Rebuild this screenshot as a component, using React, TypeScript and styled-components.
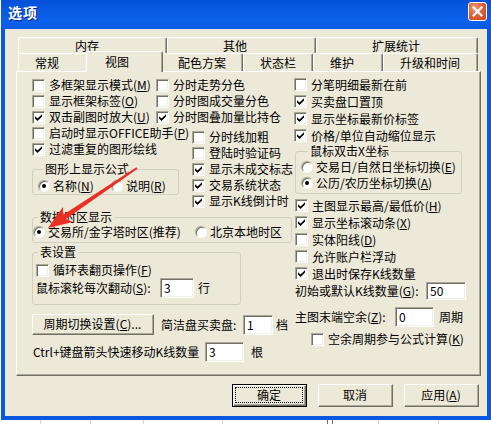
import styled, { createGlobalStyle, css } from "styled-components";

const FACE = "#ECE9D8";
const SHADOW = "#ACA899";
const DARK = "#716F64";
const FRAME_BLUE = "#0A58E0";

const GlobalStyle = createGlobalStyle`
  html, body { margin: 0; padding: 0; background: #fff; }
  body {
    font-family: "Noto Sans CJK SC", "Noto Sans", sans-serif;
    font-size: 12px;
    line-height: 12px;
    color: #000;
  }
`;

const Screen = styled.div`
  position: relative;
  width: 491px;
  height: 424px;
  overflow: hidden;
  display: flex;
  flex-direction: column;
`;

const Window = styled.div`
  width: 490px;
  height: 420px;
  margin-left: 1px;
  display: flex;
  flex-direction: column;
  flex: none;
`;

const TitleBar = styled.div`
  height: 29px;
  flex: none;
  box-sizing: border-box;
  display: flex;
  justify-content: space-between;
  align-items: flex-start;
  padding: 4px 4px 0 7px;
  background: linear-gradient(to bottom, #0350D8 0%, #0A5BE4 40%, #0C61EC 75%, #0A59E2 100%);
`;

const Title = styled.span`
  color: #fff;
  font-weight: 700;
  font-size: 14px;
  line-height: 16px;
  letter-spacing: 1px;
  text-shadow: 1px 1px 0 #0A2A80;
`;

const CloseButton = styled.div`
  width: 19px;
  height: 19px;
  margin-top: -2px;
  box-sizing: border-box;
  border: 1px solid #fff;
  border-radius: 3px;
  background: radial-gradient(circle at 35% 30%, #F09A7A 0%, #E2623C 45%, #C8421C 100%);
  display: flex;
  align-items: center;
  justify-content: center;
`;

const Body = styled.div`
  flex: 1;
  background: ${FACE};
  border: 4px solid ${FRAME_BLUE};
  border-top: none;
  padding: 8px 6px 9px 11px;
  display: flex;
  flex-direction: column;
`;

const TabRow = styled.div<{ $h: number }>`
  display: flex;
  height: ${({ $h }) => $h}px;
  margin: 0 3px 0 2px;
  flex: none;
`;

const Tab = styled.div<{ $w: number; $pad: number; $active?: boolean }>`
  flex: none;
  width: ${({ $w }) => $w}px;
  box-sizing: border-box;
  padding-left: ${({ $pad }) => $pad - 1}px;
  background: ${FACE};
  border-top: 1px solid #fff;
  border-left: 1px solid #fff;
  border-right: 1px solid ${DARK};
  box-shadow: inset -1px 0 0 ${SHADOW};
  border-radius: 2px 2px 0 0;
  display: flex;
  align-items: center;
  white-space: nowrap;
  ${({ $active, $w, $pad }) =>
    $active &&
    css`
      position: relative;
      z-index: 1;
      width: ${$w + 4}px;
      margin: -2px -2px -1px;
      padding-left: ${$pad + 1}px;
    `}
`;

const TabPanel = styled.div`
  height: 305px;
  flex: none;
  box-sizing: border-box;
  border-top: 1px solid #fff;
  border-left: 1px solid #fff;
  border-right: 1px solid ${DARK};
  border-bottom: 1px solid ${DARK};
  box-shadow: inset -1px -1px 0 ${SHADOW};
  padding: 5px 0 0 15px;
  display: flex;
`;

const LeftCol = styled.div`
  width: 262px;
  flex: none;
  display: flex;
  flex-direction: column;
`;

const RightCol = styled.div`
  flex: 1;
  display: flex;
  flex-direction: column;
  margin-top: -1px;
`;

const TopArea = styled.div`
  display: flex;
`;

const Column = styled.div<{ $w?: number; $ml?: number; $mt?: number }>`
  display: flex;
  flex-direction: column;
  flex: none;
  width: ${({ $w }) => ($w ? `${$w}px` : "auto")};
  margin-left: ${({ $ml }) => $ml ?? 0}px;
  margin-top: ${({ $mt }) => $mt ?? 0}px;
`;

const Row = styled.div<{ $h?: number; $ml?: number; $mt?: number }>`
  display: flex;
  align-items: center;
  white-space: nowrap;
  height: ${({ $h }) => $h ?? 16}px;
  margin-left: ${({ $ml }) => $ml ?? 0}px;
  margin-top: ${({ $mt }) => $mt ?? 0}px;
  flex: none;
`;

const Box = styled.span`
  width: 13px;
  height: 13px;
  flex: none;
  box-sizing: border-box;
  background: #fff;
  border: 1px solid;
  border-color: ${SHADOW} #fff #fff ${SHADOW};
  box-shadow: inset 1px 1px 0 ${DARK}, inset -1px -1px 0 #F1EFE2;
  display: flex;
  align-items: center;
  justify-content: center;
  margin-right: 4px;
`;

const RadioDot = styled.span<{ $on: boolean }>`
  width: 12px;
  height: 12px;
  flex: none;
  box-sizing: border-box;
  border-radius: 50%;
  background: #fff;
  border: 1px solid;
  border-color: ${SHADOW} #fff #fff ${SHADOW};
  box-shadow: inset 1px 1px 0 ${DARK}, 0 0 0 0.5px #E2DFD0;
  display: flex;
  align-items: center;
  justify-content: center;
  margin-right: 3px;
  &::after {
    content: "";
    width: 4px;
    height: 4px;
    border-radius: 50%;
    background: ${({ $on }) => ($on ? "#000" : "transparent")};
  }
`;

const RadioItem = styled.span<{ $w?: number }>`
  display: flex;
  align-items: center;
  flex: none;
  width: ${({ $w }) => ($w ? `${$w}px` : "auto")};
`;

const Group = styled.fieldset<{ $w: number; $pad: string; $mt?: number; $ml?: number }>`
  width: ${({ $w }) => $w}px;
  box-sizing: border-box;
  margin: ${({ $mt }) => $mt ?? 0}px 0 0 ${({ $ml }) => $ml ?? 0}px;
  min-width: 0;
  border: 1px solid #D0D0BF;
  border-radius: 3px;
  padding: ${({ $pad }) => $pad};
  flex: none;
`;

const GroupTitle = styled.legend<{ $x: number }>`
  margin-left: ${({ $x }) => $x}px;
  padding: 0 2px;
  line-height: 12px;
  font-size: 12px;
`;

const Caption = styled.span<{ $w?: number; $ml?: number }>`
  flex: none;
  width: ${({ $w }) => ($w ? `${$w}px` : "auto")};
  margin-left: ${({ $ml }) => $ml ?? 0}px;
`;

const Field = styled.div<{ $w: number; $h: number }>`
  width: ${({ $w }) => $w}px;
  height: ${({ $h }) => $h}px;
  flex: none;
  box-sizing: border-box;
  background: #fff;
  border: 1px solid;
  border-color: ${SHADOW} #fff #fff ${SHADOW};
  box-shadow: inset 1px 1px 0 ${DARK}, inset -1px -1px 0 #F1EFE2;
  padding-left: 3px;
  display: flex;
  align-items: center;
  font-size: 12px;
`;

const Button = styled.div<{ $w: number; $h: number; $default?: boolean }>`
  width: ${({ $w }) => $w}px;
  height: ${({ $h }) => $h}px;
  flex: none;
  box-sizing: border-box;
  background: ${FACE};
  display: flex;
  align-items: stretch;
  white-space: nowrap;
  ${({ $default }) =>
    $default
      ? css`
          border: 1px solid #000;
          box-shadow: inset 1px 1px 0 #fff, inset -1px -1px 0 ${DARK}, inset -2px -2px 0 ${SHADOW};
          padding: 2px 3px 3px 2px;
        `
      : css`
          border: 1px solid;
          border-color: #fff ${DARK} ${DARK} #fff;
          box-shadow: inset -1px -1px 0 ${SHADOW};
          padding: 1px 2px 2px 1px;
        `}
`;

const ButtonFace = styled.span<{ $focus?: boolean }>`
  flex: 1;
  display: flex;
  align-items: center;
  justify-content: center;
  border: 1px ${({ $focus }) => ($focus ? "dotted #000" : "solid transparent")};
`;

const ButtonRow = styled.div`
  display: flex;
  justify-content: flex-end;
  gap: 11px;
  margin-top: 8px;
  padding-right: 2px;
`;

const Backdrop = styled.div`
  flex: 1;
  display: flex;
  background: #fff;
`;

const BackCell = styled.div<{ $w: number; $line: string }>`
  width: ${({ $w }) => $w}px;
  flex: none;
  box-sizing: border-box;
  border-right: 1px solid ${({ $line }) => $line};
`;

const Annotation = styled.svg`
  position: absolute;
  left: 0;
  top: 0;
  pointer-events: none;
`;

const Check = ({ on, label, h, ml, mt }: { on?: boolean; label: React.ReactNode; h?: number; ml?: number; mt?: number }) => (
  <Row $h={h} $ml={ml} $mt={mt}>
    <Box>
      {on && (
        <svg width="7" height="7" viewBox="0 0 7 7">
          <path d="M0 2.2 L2.5 4.6 L7 0.2 L7 2.4 L2.5 6.9 L0 4.4 Z" fill="#000" />
        </svg>
      )}
    </Box>
    <span>{label}</span>
  </Row>
);

const Radio = ({ on, label, w }: { on?: boolean; label: React.ReactNode; w?: number }) => (
  <RadioItem $w={w}>
    <RadioDot $on={!!on} />
    <span>{label}</span>
  </RadioItem>
);

const lowerTabs = [
  { t: "常规", w: 70 },
  { t: "视图", w: 73, active: true },
  { t: "配色方案", w: 82 },
  { t: "状态栏", w: 70 },
  { t: "维护", w: 70 },
  { t: "升级和时间", w: 95 },
];

const upperTabs = [
  { t: "内存", w: 149, pad: 57 },
  { t: "其他", w: 149, pad: 56 },
  { t: "扩展统计", w: 162, pad: 56 },
];

const backCells = [
  { w: 41, line: "#D4D4D4" },
  { w: 50, line: "#D4D4D4" },
  { w: 53, line: "#D4D4D4" },
  { w: 79, line: "#D4D4D4" },
  { w: 105, line: "#6E6E6E" },
  { w: 5, line: "#6E6E6E" },
  { w: 46, line: "#D4D4D4" },
  { w: 60, line: "#D4D4D4" },
];

export default function App() {
  return (
    <Screen>
      <GlobalStyle />
      <Window>
        <TitleBar>
          <Title>选项</Title>
          <CloseButton>
            <svg width="11" height="11" viewBox="0 0 11 11">
              <path d="M1.5 1.5 L9.5 9.5 M9.5 1.5 L1.5 9.5" stroke="#fff" strokeWidth="2.2" strokeLinecap="square" />
            </svg>
          </CloseButton>
        </TitleBar>
        <Body>
          <TabRow $h={16}>
            {upperTabs.map((tab) => (
              <Tab key={tab.t} $w={tab.w} $pad={tab.pad}>
                {tab.t}
              </Tab>
            ))}
          </TabRow>
          <TabRow $h={18}>
            {lowerTabs.map((tab) => (
              <Tab key={tab.t} $w={tab.w} $pad={17} $active={tab.active}>
                {tab.t}
              </Tab>
            ))}
          </TabRow>
          <TabPanel>
            <LeftCol>
              <TopArea>
                <Column $w={124}>
                  <Check label={<>多框架显示模式(<u>M</u>)</>} />
                  <Check label={<>显示框架标签(<u>O</u>)</>} />
                  <Check on label={<>双击副图时放大(<u>U</u>)</>} />
                  <Check label={<>启动时显示OFFICE助手(<u>P</u>)</>} />
                  <Check on label="过滤重复的图形绘线" />
                  <Group $w={147} $mt={6} $pad="3px 0 0 5px">
                    <GroupTitle $x={5}>图形上显示公式</GroupTitle>
                    <Row>
                      <Radio on w={73} label={<>名称(<u>N</u>)</>} />
                      <Radio label={<>说明(<u>R</u>)</>} />
                    </Row>
                  </Group>
                </Column>
                <Column>
                  <Check label="分时走势分色" />
                  <Check label="分时图成交量分色" />
                  <Check on label="分时图叠加量比持仓" />
                  <Column $ml={36} $mt={4}>
                    <Check label="分时线加粗" />
                    <Check label="登陆时验证码" />
                    <Check on label="显示未成交标志" />
                    <Check on label="交易系统状态" />
                    <Check on label="显示K线倒计时" />
                  </Column>
                </Column>
              </TopArea>
              <Group $w={260} $mt={2} $pad="1px 0 2px 0">
                <GroupTitle $x={5}>数据时区显示</GroupTitle>
                <Row>
                  <Radio on w={162} label="交易所/金字塔时区(推荐)" />
                  <Radio label="北京本地时区" />
                </Row>
              </Group>
              <Group $w={209} $mt={3} $pad="4px 0 6px 3px">
                <GroupTitle $x={2}>表设置</GroupTitle>
                <Check label={<>循环表翻页操作(<u>F</u>)</>} />
                <Row $h={20}>
                  <Caption $w={124}>
                    鼠标滚轮每次翻动(<u>S</u>):
                  </Caption>
                  <Field $w={34} $h={20}>3</Field>
                  <Caption $ml={4}>行</Caption>
                </Row>
              </Group>
              <Row $h={21} $mt={9}>
                <Button $w={122} $h={21}>
                  <ButtonFace>
                    周期切换设置(<u>C</u>)...
                  </ButtonFace>
                </Button>
                <Caption $w={82} $ml={7}>
                  简洁盘买卖盘:
                </Caption>
                <Field $w={30} $h={20}>1</Field>
                <Caption $ml={3}>档</Caption>
              </Row>
              <Row $h={20} $mt={7}>
                <Caption $w={172} $ml={1}>
                  Ctrl+键盘箭头快速移动K线数量
                </Caption>
                <Field $w={39} $h={20}>3</Field>
                <Caption $ml={7}>根</Caption>
              </Row>
            </LeftCol>
            <RightCol>
              <Check h={17} label="分笔明细最新在前" />
              <Check h={17} on label="买卖盘口置顶" />
              <Check h={17} on label="显示坐标最新价标签" />
              <Check h={17} on label="价格/单位自动缩位显示" />
              <Group $w={167} $mt={1} $ml={1} $pad="2px 0 2px 5px">
                <GroupTitle $x={7}>鼠标双击X坐标</GroupTitle>
                <Row>
                  <Radio label={<>交易日/自然日坐标切换(<u>E</u>)</>} />
                </Row>
                <Row>
                  <Radio on label={<>公历/农历坐标切换(<u>A</u>)</>} />
                </Row>
              </Group>
              <Column $ml={1} $mt={3}>
                <Check h={17} on label={<>主图显示最高/最低价(<u>H</u>)</>} />
                <Check h={17} on label={<>显示坐标滚动条(<u>X</u>)</>} />
                <Check h={17} label={<>实体阳线(<u>D</u>)</>} />
                <Check h={17} label="允许账户栏浮动" />
                <Check h={17} on label="退出时保存K线数量" />
                <Row $h={18}>
                  <Caption $w={131}>
                    初始或默认K线数量(<u>G</u>):
                  </Caption>
                  <Field $w={40} $h={18}>50</Field>
                </Row>
                <Row $h={20} $mt={7}>
                  <Caption $w={100}>
                    主图末端空余(<u>Z</u>):
                  </Caption>
                  <Field $w={39} $h={20}>0</Field>
                  <Caption $ml={5}>周期</Caption>
                </Row>
                <Check ml={16} mt={4} label={<>空余周期参与公式计算(<u>K</u>)</>} />
              </Column>
            </RightCol>
          </TabPanel>
          <ButtonRow>
            <Button $w={75} $h={23} $default>
              <ButtonFace $focus>确定</ButtonFace>
            </Button>
            <Button $w={75} $h={23}>
              <ButtonFace>取消</ButtonFace>
            </Button>
            <Button $w={75} $h={23}>
              <ButtonFace>
                应用(<u>A</u>)
              </ButtonFace>
            </Button>
          </ButtonRow>
        </Body>
      </Window>
      <Backdrop>
        {backCells.map((c, i) => (
          <BackCell key={i} $w={c.w} $line={c.line} />
        ))}
      </Backdrop>
      <Annotation width="491" height="424" viewBox="0 0 491 424">
        <polygon
          points="137.6,168.8 66,218.9 72.9,222.1 48,228 62.9,207.1 63.2,214.7 136.4,167.2"
          fill="#EC2F24"
        />
      </Annotation>
    </Screen>
  );
}
